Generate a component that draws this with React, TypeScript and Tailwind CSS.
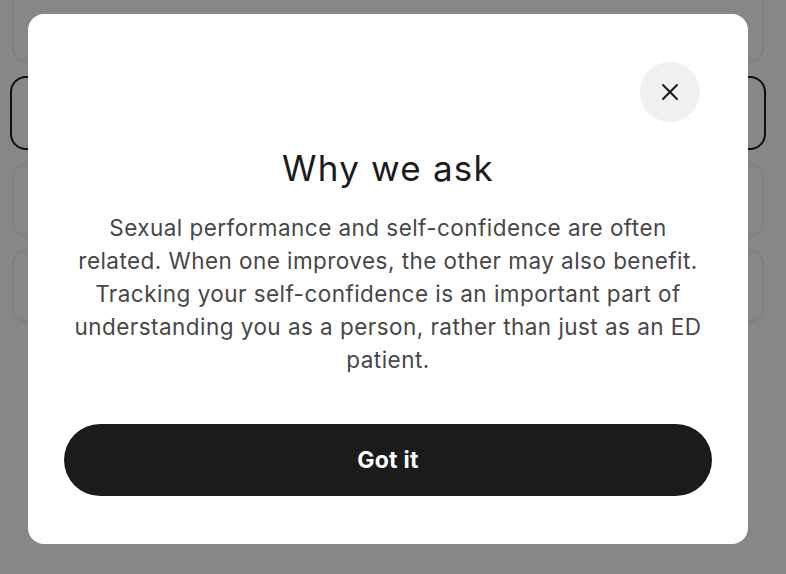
import { X } from "lucide-react";

export default function App() {
  return (
    <div className="relative h-[574px] w-full overflow-hidden bg-white font-['Inter',sans-serif]">
      {/* page behind the dialog */}
      <div className="-mt-[10px] flex flex-col gap-[14px] pl-[12px] pr-[22px]">
        <div className="h-[72px] rounded-[14px] border border-[#e6e6e6]" />
        <div className="-mx-[2px] h-[74px] rounded-[16px] border-2 border-[#1b1b1b]" />
        <div className="h-[72px] rounded-[14px] border border-[#e6e6e6]" />
        <div className="h-[72px] rounded-[14px] border border-[#e6e6e6]" />
      </div>

      {/* overlay */}
      <div className="absolute inset-0 bg-black/[0.47]" />

      {/* dialog */}
      <div className="absolute left-[28px] top-[14px] flex h-[530px] w-[720px] flex-col rounded-[16px] bg-white px-[36px] pt-[48px] pb-[48px]">
        <div className="flex justify-end pr-[12px]">
          <button className="flex h-[60px] w-[60px] items-center justify-center rounded-full bg-[#f0f0f0] text-[#1b1b1b]">
            <X size={28} strokeWidth={1.75} />
          </button>
        </div>
        <h2 className="mt-[25px] text-center text-[35px] leading-[42px] font-normal tracking-[1.2px] text-[#1b1b1b]">
          Why we ask
        </h2>
        <p className="mt-[22px] text-center text-[22.5px] leading-[33px] tracking-[0.45px] text-[#474747]">
          Sexual performance and self-confidence are often
          <br />
          related. When one improves, the other may also benefit.
          <br />
          Tracking your self-confidence is an important part of
          <br />
          understanding you as a person, rather than just as an ED
          <br />
          patient.
        </p>
        <button className="mt-auto flex h-[72px] w-full items-center justify-center rounded-full bg-[#1b1b1b] text-[23px] font-bold tracking-[0.3px] text-white">
          Got it
        </button>
      </div>
    </div>
  );
}
